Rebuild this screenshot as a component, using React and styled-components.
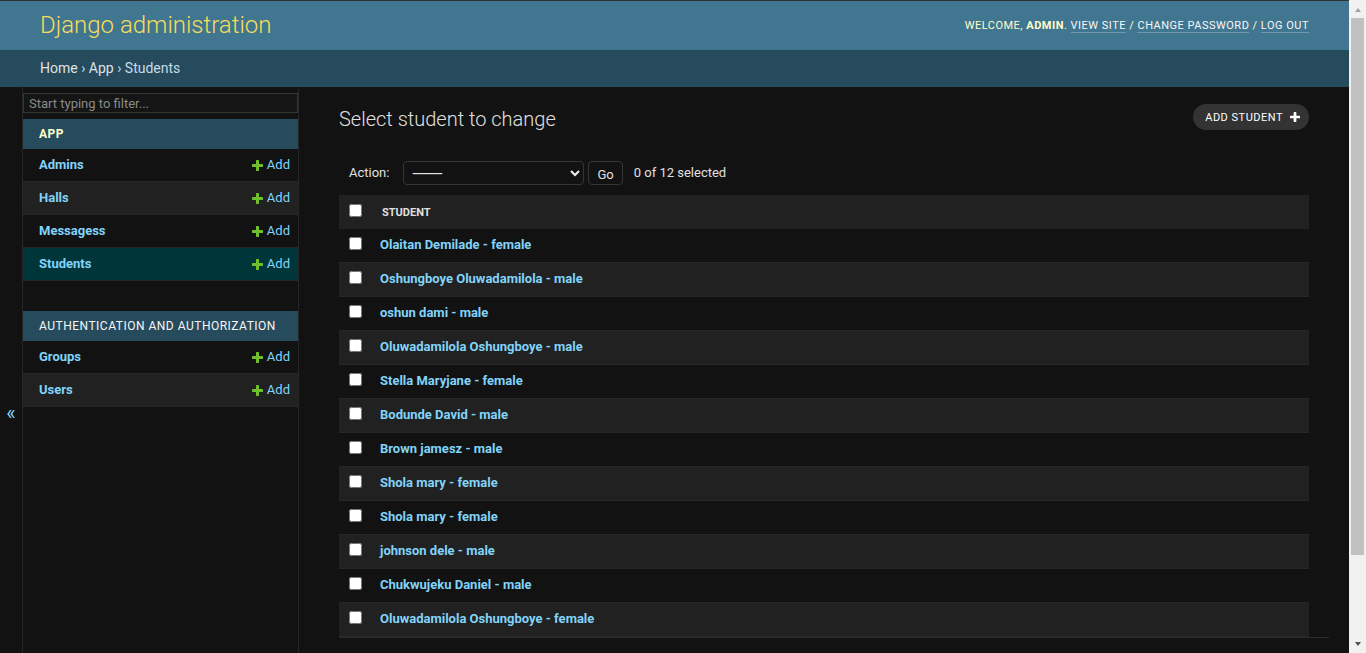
import React from "react";
import styled, { createGlobalStyle } from "styled-components";

const GlobalStyle = createGlobalStyle`
  html, body { overflow: hidden; background: #121212; }
  body {
    margin: 0;
    background: #121212;
    color: #eeeeee;
    font-family: Roboto, "Noto Sans", "Liberation Sans", sans-serif;
    font-size: 14px;
  }
`;

const Viewport = styled.div`
  display: flex;
  height: 100vh;
  overflow: hidden;
`;

const Page = styled.div`
  flex: 1;
  min-width: 0;
  height: 100vh;
  overflow: hidden;
`;

const ScrollTrack = styled.div`
  flex: 0 0 17px;
  display: flex;
  flex-direction: column;
  height: 100vh;
  background: #f1f1f1;
`;

const ScrollButton = styled.div`
  flex: 0 0 17px;
  display: flex;
  justify-content: center;
  align-items: flex-start;
  padding-top: ${(p) => (p.$dir === "up" ? "8px" : "6px")};
  box-sizing: border-box;

  &::before {
    content: "";
    width: 0;
    height: 0;
    border-left: 3.5px solid transparent;
    border-right: 3.5px solid transparent;
    ${(p) =>
      p.$dir === "up"
        ? "border-bottom: 4px solid #a3a3a3;"
        : "border-top: 4px solid #505050;"}
  }
`;

const ScrollArea = styled.div`
  flex: 1;
  padding: 1px 2px 0;
`;

const Thumb = styled.div`
  height: 537px;
  background: #c1c1c1;
`;

const Header = styled.header`
  display: flex;
  align-items: center;
  justify-content: space-between;
  height: 49px;
  padding: 0 40px;
  border-top: 1px solid #2e3235;
  background: #417690;
`;

const Branding = styled.h1`
  margin: 0;
  font-size: 24px;
  line-height: 29px;
  font-weight: 300;
  color: #f5dd5d;
`;

const UserTools = styled.div`
  font-size: 11px;
  letter-spacing: 0.5px;
  text-transform: uppercase;
  color: #ffffcc;
  white-space: nowrap;

  strong { font-weight: 700; }
`;

const TopLink = styled.a`
  color: #f7f7f7;
  text-decoration: none;
  border-bottom: 1px solid rgba(255, 255, 255, 0.25);
`;

const Breadcrumbs = styled.nav`
  padding: 10px 40px;
  line-height: 17px;
  font-size: 14px;
  background: #264b5d;
  color: #c4dce8;
`;

const Crumb = styled.a`
  color: #e0e0e0;
  text-decoration: none;
`;

const Main = styled.div`
  display: flex;
  align-items: stretch;
`;

const ToggleButton = styled.button`
  flex: 0 0 23px;
  box-sizing: border-box;
  width: 23px;
  height: 100vh;
  display: flex;
  align-items: center;
  justify-content: center;
  padding: 0 0 1px;
  border: 0;
  border-right: 1px solid #272727;
  background: #121212;
  color: #81d4fa;
  font-family: inherit;
  font-size: 20px;
`;

const NavSidebar = styled.nav`
  flex: 0 0 275px;
  border-top: 1px solid transparent;
  border-right: 1px solid #272727;
  background: #121212;
`;

const FilterInput = styled.input`
  display: block;
  box-sizing: border-box;
  width: 100%;
  height: 20px;
  margin: 5px 0 6px;
  padding: 2px 5px;
  border: 1px solid #353535;
  background: #151515;
  color: #eeeeee;
  font-family: inherit;
  font-size: 13px;
  outline: none;

  &::placeholder { color: #8a8a8a; }
`;

const Module = styled.div`
  margin-bottom: 30px;
`;

const Caption = styled.div`
  padding: 8px 16px;
  line-height: 14px;
  font-size: 12px;
  letter-spacing: 0.5px;
  text-transform: uppercase;
  background: #264b5d;
  color: ${(p) => (p.$current ? "#ffffcc" : "#f7f7f7")};
  font-weight: ${(p) => (p.$current ? 700 : 400)};
`;

const ModelRow = styled.div`
  display: flex;
  align-items: center;
  justify-content: space-between;
  padding: 8px 8px 8px 16px;
  line-height: 16px;
  font-size: 13px;
  border-bottom: 1px solid #272727;
  background: ${(p) => (p.$selected ? "#00363a" : p.$alt ? "#212121" : "#121212")};
`;

const ModelName = styled.a`
  font-weight: 700;
  color: #81d4fa;
  text-decoration: none;
`;

const AddLink = styled.a`
  display: flex;
  align-items: center;
  gap: 4px;
  color: #81d4fa;
  text-decoration: none;
`;

const Content = styled.div`
  flex: 1;
  min-width: 0;
  padding: 20px 40px;
`;

const TitleRow = styled.div`
  display: flex;
  align-items: flex-start;
  justify-content: space-between;
  margin-bottom: 20px;
`;

const Title = styled.h1`
  margin: 0;
  font-size: 20px;
  line-height: 24px;
  font-weight: 300;
  color: #e0e0e0;
`;

const AddButton = styled.a`
  display: flex;
  align-items: center;
  gap: 7px;
  height: 26px;
  margin-top: -3px;
  padding: 0 9px 0 12px;
  box-sizing: border-box;
  border-radius: 15px;
  background: #333333;
  color: #ffffff;
  font-size: 11px;
  letter-spacing: 0.5px;
  text-transform: uppercase;
  text-decoration: none;
`;

const Actions = styled.div`
  display: flex;
  align-items: center;
  height: 24px;
  padding: 10px;
  font-size: 13px;
  color: #e0e0e0;
`;

const ActionLabel = styled.label`
  margin-right: 14px;
  margin-top: -1px;
`;

const ActionSelect = styled.select`
  width: 181px;
  height: 24px;
  margin: 0 4px 0 0;
  padding: 0 0 0 4px;
  color-scheme: dark;
  background: #121212;
  color: #eeeeee;
  border: 1px solid #353535;
  border-radius: 4px;
  font-family: inherit;
  font-size: 14px;
  letter-spacing: -0.6px;
`;

const GoButton = styled.button`
  height: 24px;
  padding: 4px 8px 2px;
  border: 1px solid #353535;
  border-radius: 4px;
  background: #121212;
  color: #e0e0e0;
  font-family: inherit;
  font-size: 13px;
  line-height: 1;
`;

const Counter = styled.span`
  margin-left: 11px;
  margin-top: -1px;
`;

const Results = styled.div`
  width: 100%;
`;

const Row = styled.div`
  display: grid;
  grid-template-columns: 31px 1fr;
  align-items: start;
  box-sizing: border-box;
  height: 34px;
  padding-top: ${(p) => (p.$head ? "9px" : "8px")};
  border-bottom: ${(p) => (p.$head ? "0" : "1px solid #272727")};
  background: ${(p) => (p.$alt || p.$head ? "#212121" : "#121212")};
`;

const Check = styled.input.attrs({ type: "checkbox" })`
  width: 13px;
  height: 13px;
  margin: 0 0 0 10px;
`;

const HeadText = styled.span`
  padding-left: 12px;
  margin-top: 1px;
  line-height: 16px;
  font-size: 11px;
  font-weight: 700;
  text-transform: uppercase;
  color: #e0e0e0;
`;

const StudentLink = styled.a`
  padding-left: 10px;
  line-height: 16px;
  font-size: 13px;
  font-weight: 700;
  color: #81d4fa;
  text-decoration: none;
`;

const Paginator = styled.p`
  width: 100%;
  margin: 0;
  padding: 20px 10px 10px;
  line-height: 22px;
  font-size: 13px;
  color: #e0e0e0;
  border-top: 1px solid #2c2c2c;
  border-bottom: 1px solid #272727;
`;

const Plus = ({ color, size }) => (
  <svg width={size} height={size} viewBox="192 128 1408 1408" aria-hidden="true">
    <path
      fill={color}
      d="M1600 736v192q0 40-28 68t-68 28h-416v416q0 40-28 68t-68 28h-192q-40 0-68-28t-28-68v-416h-416q-40 0-68-28t-28-68v-192q0-40 28-68t68-28h416v-416q0-40 28-68t68-28h192q40 0 68 28t28 68v416h416q40 0 68 28t28 68z"
    />
  </svg>
);

const apps = [
  {
    name: "App",
    current: true,
    models: ["Admins", "Halls", "Messagess", "Students"],
    selected: "Students",
  },
  {
    name: "Authentication and Authorization",
    current: false,
    models: ["Groups", "Users"],
  },
];

const students = [
  "Olaitan Demilade - female",
  "Oshungboye Oluwadamilola - male",
  "oshun dami - male",
  "Oluwadamilola Oshungboye - male",
  "Stella Maryjane - female",
  "Bodunde David - male",
  "Brown jamesz - male",
  "Shola mary - female",
  "Shola mary - female",
  "johnson dele - male",
  "Chukwujeku Daniel - male",
  "Oluwadamilola Oshungboye - female",
];

export default function App() {
  return (
    <Viewport>
      <GlobalStyle />
      <Page>
        <Header>
          <Branding>Django administration</Branding>
          <UserTools>
            Welcome, <strong>admin</strong>. <TopLink>View site</TopLink> /{" "}
            <TopLink>Change password</TopLink> / <TopLink>Log out</TopLink>
          </UserTools>
        </Header>
        <Breadcrumbs>
          <Crumb>Home</Crumb> › <Crumb>App</Crumb> › Students
        </Breadcrumbs>
        <Main>
          <ToggleButton>«</ToggleButton>
          <NavSidebar>
            <FilterInput placeholder="Start typing to filter..." />
            {apps.map((app) => (
              <Module key={app.name}>
                <Caption $current={app.current}>{app.name}</Caption>
                {app.models.map((m, i) => (
                  <ModelRow key={m} $alt={i % 2 === 1} $selected={app.selected === m}>
                    <ModelName>{m}</ModelName>
                    <AddLink>
                      <Plus color="#70bf2b" size={11} />
                      Add
                    </AddLink>
                  </ModelRow>
                ))}
              </Module>
            ))}
          </NavSidebar>
          <Content>
            <TitleRow>
              <Title>Select student to change</Title>
              <AddButton>
                Add student
                <Plus color="#ffffff" size={10} />
              </AddButton>
            </TitleRow>
            <Actions>
              <ActionLabel>Action:</ActionLabel>
              <ActionSelect defaultValue="">
                <option value="">---------</option>
                <option value="delete">Delete selected students</option>
              </ActionSelect>
              <GoButton>Go</GoButton>
              <Counter>0 of 12 selected</Counter>
            </Actions>
            <Results>
              <Row $head>
                <Check />
                <HeadText>Student</HeadText>
              </Row>
              {students.map((s, i) => (
                <Row key={i} $alt={i % 2 === 1}>
                  <Check />
                  <StudentLink>{s}</StudentLink>
                </Row>
              ))}
            </Results>
            <Paginator>12 students</Paginator>
          </Content>
        </Main>
      </Page>
      <ScrollTrack>
        <ScrollButton $dir="up" />
        <ScrollArea>
          <Thumb />
        </ScrollArea>
        <ScrollButton $dir="down" />
      </ScrollTrack>
    </Viewport>
  );
}
